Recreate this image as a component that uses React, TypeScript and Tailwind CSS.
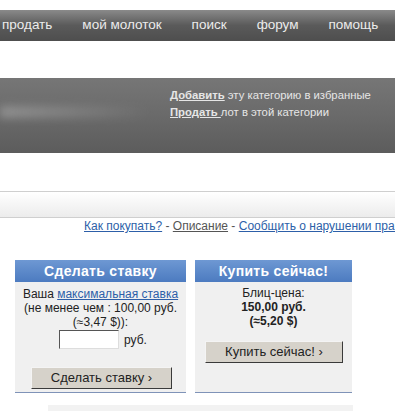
import React from 'react';

const navItems = ['продать', 'мой молоток', 'поиск', 'форум', 'помощь'];

const BidButton: React.FC<{ label: string; className?: string }> = ({ label, className }) => (
  <button
    className={`h-[22px] bg-[#d6d2ca] border border-t-[#f4f4f4] border-l-[#f4f4f4] border-r-[#3a3a3a] border-b-[#3a3a3a] text-[13px] text-[#222] leading-none ${className ?? ''}`}
  >
    {label} ›
  </button>
);

const App: React.FC = () => {
  return (
    <div className="w-[395px] h-[411px] overflow-hidden bg-white font-['Liberation_Sans',Arial,sans-serif]">
      {/* top nav */}
      <div className="h-[10px]" />
      <div className="h-[31px] flex items-center gap-[30px] pl-0.5 bg-gradient-to-b from-[#8a8a8a] via-[#5a5a5a] to-[#4e4e4e] text-[#ececec] text-[13.5px] whitespace-nowrap">
        {navItems.map((item) => (
          <span key={item}>{item}</span>
        ))}
      </div>
      <div className="h-[37px]" />

      {/* category banner */}
      <div className="h-[75px] relative bg-gradient-to-b from-[#767676] via-[#6a6a6a] to-[#5c5c5c] overflow-hidden">
        <div className="absolute left-0 top-[28px] w-[150px] h-[12px] bg-gradient-to-r from-[#a0a0a0] to-transparent blur-[4px] opacity-70" />
        <div className="relative pl-[170px] pt-[9px] text-[11.3px] leading-[17px] text-[#e6e6e6] whitespace-nowrap">
          <div>
            <a className="font-bold underline">Добавить</a> эту категорию в избранные
          </div>
          <div>
            <a className="font-bold underline">Продать </a>лот в этой категории
          </div>
        </div>
      </div>
      <div className="h-[38px]" />

      {/* grey strip */}
      <div className="h-[27px] border-t border-b border-[#cfcfcf] bg-gradient-to-b from-[#ffffff] to-[#ececec]" />

      {/* links */}
      <div className="pl-[84px] pt-[1px] text-[12px] leading-[14px] whitespace-nowrap text-[#555]">
        <a className="text-[#2d5fa8] underline">Как покупать?</a> - <a className="underline">Описание</a> -{' '}
        <a className="text-[#2d5fa8] underline">Сообщить о нарушении правил</a>
      </div>

      {/* boxes */}
      <div className="flex gap-[9px] pl-[15px] pt-[27px]">
        <div className="w-[171px] h-[133px] bg-[#f0f0f0] border-b border-[#7f93b8] flex flex-col">
          <div className="h-[22px] flex items-center justify-center bg-gradient-to-b from-[#6e98d3] to-[#4c7bc0] text-white font-bold text-[14px] tracking-[0.3px]">
            Сделать ставку
          </div>
          <div className="text-[12px] leading-[14px] text-[#222] text-center pt-[5px]">
            <div>
              Ваша <a className="text-[#2d5fa8] underline">максимальная ставка</a>
            </div>
            <div>(не менее чем : 100,00 руб.</div>
            <div>(≈3,47 $)):</div>
          </div>
          <div className="flex items-center pl-[44px] pt-[1px] gap-[5px] text-[12px] text-[#222]">
            <input className="w-[60px] h-[19px] bg-white border border-t-[#555] border-l-[#555] border-r-[#ddd] border-b-[#ddd]" />
            <span>руб.</span>
          </div>
          <div className="pl-[16px] pt-[16px]">
            <BidButton label="Сделать ставку" className="w-[141px]" />
          </div>
        </div>

        <div className="w-[157px] h-[133px] bg-[#f0f0f0] border-b border-[#7f93b8] flex flex-col">
          <div className="h-[22px] flex items-center justify-center bg-gradient-to-b from-[#6e98d3] to-[#4c7bc0] text-white font-bold text-[14px] tracking-[0.3px]">
            Купить сейчас!
          </div>
          <div className="text-[12px] leading-[14px] text-[#222] text-center pt-[4px]">
            <div>Блиц-цена:</div>
            <div className="font-bold">150,00 руб.</div>
            <div className="font-bold">(≈5,20 $)</div>
          </div>
          <div className="pl-[10px] pt-[11px]">
            <BidButton label="Купить сейчас!" className="w-[138px]" />
          </div>
        </div>
      </div>

      {/* bottom strip */}
      <div className="ml-[48px] mt-[12px] w-[305px] h-[8px] bg-[#f2f2f2]" />
    </div>
  );
};

export default App;
